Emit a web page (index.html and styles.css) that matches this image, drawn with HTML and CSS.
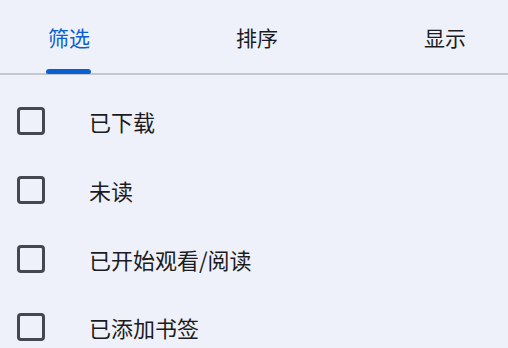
FILE: index.html
```html
<!DOCTYPE html>
<html lang="zh-CN">
<head>
<meta charset="utf-8">
<link rel="stylesheet" href="styles.css">
</head>
<body>
<div class="sheet">
  <div class="tabs">
    <div class="tab active">筛选</div>
    <div class="tab">排序</div>
    <div class="tab">显示</div>
  </div>
  <div class="list">
    <div class="row"><span class="box"></span><span class="label">已下载</span></div>
    <div class="row"><span class="box"></span><span class="label">未读</span></div>
    <div class="row"><span class="box"></span><span class="label">已开始观看/阅读</span></div>
    <div class="row"><span class="box"></span><span class="label">已添加书签</span></div>
  </div>
</div>
</body>
</html>
```
FILE: styles.css
```css
html, body {
  margin: 0;
  padding: 0;
  background: #eff1fa;
}
body {
  width: 508px;
  height: 348px;
  overflow: hidden;
  font-family: "Noto Sans CJK SC", "Noto Sans", sans-serif;
  color: #1b1b20;
}
.sheet {
  display: flex;
  flex-direction: column;
}
.tabs {
  display: flex;
  justify-content: space-between;
  height: 73px;
  padding: 0 42px 0 48px;
  border-bottom: 2px solid #c6c7cd;
}
.tab {
  position: relative;
  display: flex;
  align-items: center;
  font-size: 21px;
  line-height: 1;
  color: #1b1b20;
  padding-top: 1px;
}
.tab.active {
  color: #0b5ed0;
}
.tab.active::after {
  content: "";
  position: absolute;
  left: -2px;
  right: -1px;
  bottom: -1px;
  height: 5px;
  border-radius: 3px 3px 2px 2px;
  background: #0b5ed0;
}
.list {
  display: flex;
  flex-direction: column;
  padding-top: 12px;
}
.row {
  display: flex;
  align-items: center;
  height: 68.7px;
  padding-left: 17px;
}
.box {
  box-sizing: border-box;
  width: 28px;
  height: 28px;
  border: 3px solid #45474e;
  border-radius: 4px;
  flex: none;
}
.label {
  margin-left: 44px;
  font-size: 22px;
  line-height: 1;
}
```
